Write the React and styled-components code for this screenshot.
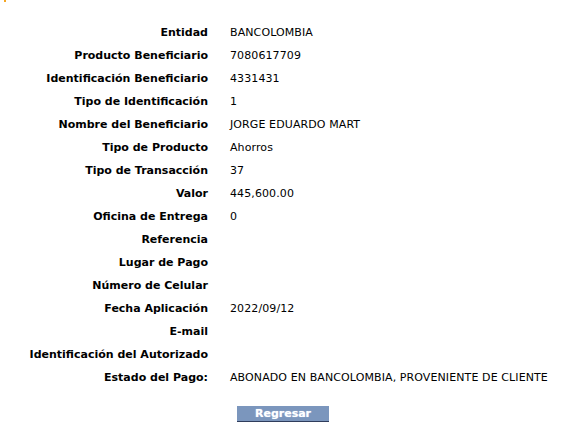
import React from "react";
import styled, { createGlobalStyle } from "styled-components";

const GlobalStyle = createGlobalStyle`
  html, body {
    margin: 0;
    padding: 0;
    background: #ffffff;
  }
  body {
    font-family: "DejaVu Sans", Verdana, sans-serif;
    font-size: 11px;
    color: #000000;
  }
`;

const Page = styled.div`
  width: 570px;
  min-height: 447px;
  display: flex;
  flex-direction: column;
`;

const CornerMark = styled.div`
  width: 2px;
  height: 2px;
  margin-left: 4px;
  background: #f5a623;
`;

const DetailGrid = styled.div`
  display: grid;
  grid-template-columns: 208px auto;
  column-gap: 22px;
  grid-auto-rows: 23px;
  padding-top: 19px;
`;

const Label = styled.div`
  font-weight: bold;
  text-align: right;
  display: flex;
  align-items: center;
  justify-content: flex-end;
  white-space: nowrap;
  color: #000000;
`;

const Value = styled.div`
  display: flex;
  align-items: center;
  white-space: nowrap;
  letter-spacing: 0.1px;
  color: #000000;
`;

const Actions = styled.div`
  display: flex;
  padding-left: 237px;
  padding-top: 17px;
`;

const Button = styled.button`
  width: 92px;
  height: 16px;
  padding: 0;
  border: none;
  border-bottom: 1px solid #2f3d5c;
  background: #7b96bd;
  color: #ffffff;
  font-family: "DejaVu Sans", Verdana, sans-serif;
  font-size: 11px;
  font-weight: bold;
  line-height: 15px;
  text-shadow: 0 0 1px #c8d8f0;
  cursor: pointer;
`;

const rows = [
  ["Entidad", "BANCOLOMBIA"],
  ["Producto Beneficiario", "7080617709"],
  ["Identificación Beneficiario", "4331431"],
  ["Tipo de Identificación", "1"],
  ["Nombre del Beneficiario", "JORGE EDUARDO MART"],
  ["Tipo de Producto", "Ahorros"],
  ["Tipo de Transacción", "37"],
  ["Valor", "445,600.00"],
  ["Oficina de Entrega", "0"],
  ["Referencia", ""],
  ["Lugar de Pago", ""],
  ["Número de Celular", ""],
  ["Fecha Aplicación", "2022/09/12"],
  ["E-mail", ""],
  ["Identificación del Autorizado", ""],
  ["Estado del Pago:", "ABONADO EN BANCOLOMBIA, PROVENIENTE DE CLIENTE"],
];

export default function App() {
  return (
    <>
      <GlobalStyle />
      <Page>
        <CornerMark />
        <DetailGrid>
          {rows.map(([label, value]) => (
            <React.Fragment key={label}>
              <Label>{label}</Label>
              <Value>{value}</Value>
            </React.Fragment>
          ))}
        </DetailGrid>
        <Actions>
          <Button type="button">Regresar</Button>
        </Actions>
      </Page>
    </>
  );
}
